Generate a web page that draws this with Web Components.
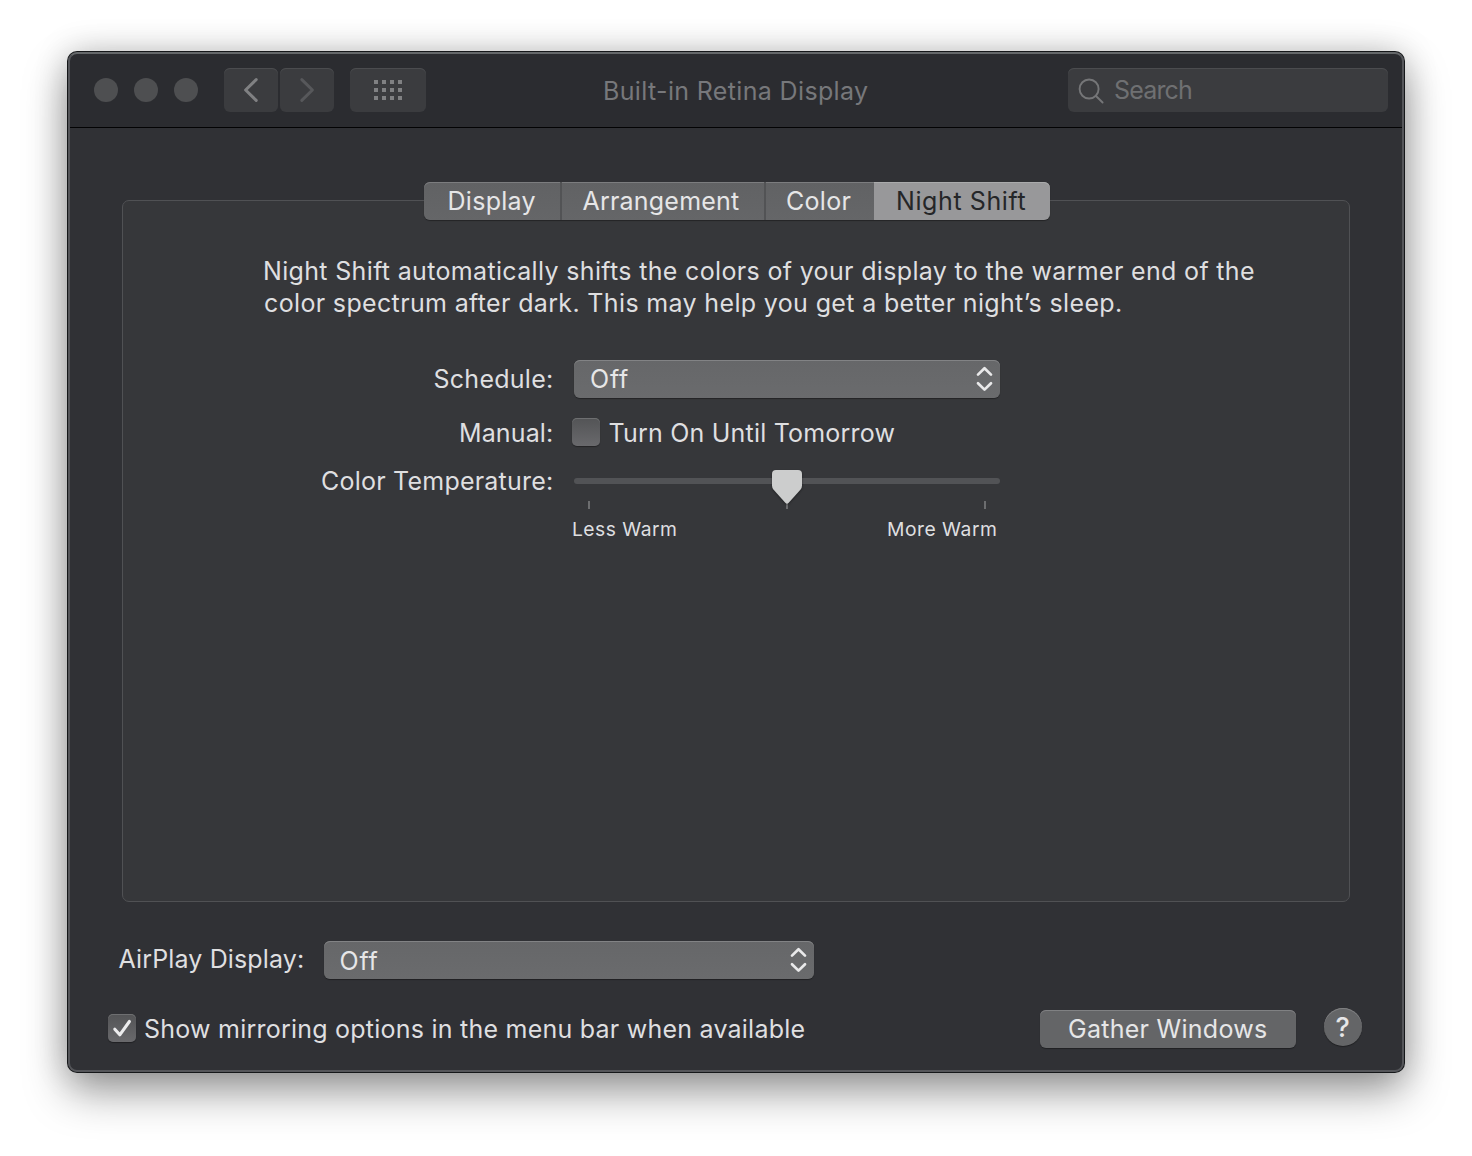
<!DOCTYPE html>
<html lang="en">
<head>
<meta charset="utf-8">
<title>Built-in Retina Display</title>
<style>
html,body{margin:0;background:#fff}
body{width:1472px;height:1156px;overflow:hidden;font-family:Inter,"Liberation Sans",sans-serif;font-size:25px;color:#dfdfe0}
</style>
</head>
<body>
<prefs-window>
  <prefs-toolbar slot="toolbar"></prefs-toolbar>
  <prefs-tabs slot="tabs">
    <prefs-tab style="width:136px;padding-left:25.5px"><ui-label w="86">Display</ui-label></prefs-tab>
    <prefs-tab style="width:204px;padding-left:20.5px"><ui-label w="156.5">Arrangement</ui-label></prefs-tab>
    <prefs-tab style="width:110px;padding-left:21px"><ui-label w="63.5">Color</ui-label></prefs-tab>
    <prefs-tab selected style="width:176px;padding-left:24px"><ui-label w="127.5">Night Shift</ui-label></prefs-tab>
  </prefs-tabs>
  <night-shift-pane slot="pane"></night-shift-pane>
  <prefs-footer slot="footer"></prefs-footer>
</prefs-window>
<script>
const ctx = document.createElement('canvas').getContext('2d');
const define = (name, html, setup) => customElements.define(name, class extends HTMLElement {
  connectedCallback() {
    if (this.shadowRoot) return;
    const root = this.attachShadow({mode: 'open'});
    root.innerHTML = '<style>*,:host{box-sizing:border-box}</style>' + html;
    if (setup) setup(this, root);
  }
});

// One line of text, tracked so that its visible glyphs span exactly `w` pixels.
define('ui-label', `<style>
  :host{display:block;flex:none;line-height:32px;height:32px;white-space:pre}
  span{display:block;width:max-content}
</style><span><slot></slot></span>`, (el, root) => {
  const s = getComputedStyle(el), text = el.textContent, w = +el.getAttribute('w');
  ctx.font = s.fontWeight + ' ' + s.fontSize + ' ' + s.fontFamily;
  const m = ctx.measureText(text);
  const ink = m.actualBoundingBoxLeft + m.actualBoundingBoxRight;
  el.style.width = w + 'px';
  const span = root.querySelector('span');
  span.style.marginLeft = m.actualBoundingBoxLeft + 'px';
  if (text.length > 1) span.style.letterSpacing = ((w - ink) / (text.length - 1)).toFixed(3) + 'px';
});

define('ui-select', `<style>
  :host{display:flex;flex:none;align-items:center;height:38px;padding:0 7px 0 17px;border-radius:6px;color:#e6e6e7;
    background:linear-gradient(#666769,#6a6b6d);box-shadow:inset 0 1px 0 #828385,0 1px 1px rgba(0,0,0,.35)}
  svg{margin-left:auto}
</style><slot></slot>
<svg width="17" height="26" viewBox="0 0 17 26" fill="none" stroke="#e9e9ea" stroke-width="2.7" stroke-linecap="round" stroke-linejoin="round"><path d="M2 8.6 8.5 2.2 15 8.6M2 17.2 8.5 23.6 15 17.2"/></svg>`);

define('ui-checkbox', `<style>
  :host{display:block;flex:none;width:28px;height:28px;border-radius:5px;background:linear-gradient(#535456,#69696c);
    box-shadow:inset 0 1px 0 #6e6f71,0 1px 1px rgba(0,0,0,.35)}
  svg{display:none}
  :host([checked]) svg{display:block}
</style><svg width="28" height="28" viewBox="0 0 28 28" fill="none" stroke="#ececed" stroke-width="3.1" stroke-linecap="round" stroke-linejoin="round"><path d="M6.8 15.2 11.8 20.8 21.4 7.5"/></svg>`);

define('ui-button', `<style>
  :host{display:flex;flex:none;align-items:center;height:38px;border-radius:6px;color:#e6e6e7;
    background:#646567;box-shadow:inset 0 1px 0 #808183,0 1px 1px rgba(0,0,0,.35)}
  :host([round]){width:38px;border-radius:50%;justify-content:center}
</style><slot></slot>`);

define('ui-slider', `<style>
  :host{display:grid;flex:none;width:426px;height:39px}
  .track{grid-area:1/1;margin-top:8px;height:6px;border-radius:3px;background:#525356}
  .ticks{grid-area:1/1;display:flex;justify-content:space-between;align-items:flex-end;padding:0 14px}
  i{width:2px;height:8px;background:#6c6d6f}
  svg{grid-area:1/1;justify-self:center;filter:drop-shadow(0 1px 1px rgba(0,0,0,.4))}
</style><div class="track"></div><div class="ticks"><i></i><i></i><i></i></div>
<svg width="30" height="34" viewBox="0 0 30 34"><path fill="#cccdcd" d="M4 0H26Q30 0 30 4V15.5Q30 18 28.4 19.8L16.5 33Q15 34.5 13.5 33L1.6 19.8Q0 18 0 15.5V4Q0 0 4 0Z"/></svg>`);

define('toolbar-button', `<style>
  :host{display:block;flex:none;width:54px;height:44px;border-radius:6px;background:#3b3c3f;box-shadow:inset 0 1px 0 #4b4c4f}
  :host([wide]){width:76px}
</style><slot></slot>`);

define('toolbar-search', `<style>
  :host{display:flex;flex:none;width:320px;height:44px;padding:6px 0 0 10px;gap:11px;border-radius:6px;background:#3b3c3f;color:#6f7072;box-shadow:inset 0 1px 0 #4b4c4f}
  svg{margin-top:4px}
</style><svg width="26" height="26" viewBox="0 0 26 26" fill="none" stroke="#757678" stroke-width="1.9" stroke-linecap="round"><circle cx="11.1" cy="11" r="9.5"/><path d="m18 18 6.6 6.5"/></svg>
<ui-label w="76">Search</ui-label>`);

define('prefs-toolbar', `<style>
  :host{display:flex;align-items:flex-start;height:76px;padding:16px 16px 0 26px;background:#2b2c30;border-bottom:1px solid #030304}
  .lights{display:flex;gap:16px;margin:10px 26px 0 0}
  .lights i{width:24px;height:24px;border-radius:50%;background:#4e4f51}
  .nav{display:flex;gap:2px;margin-right:16px}
  svg{display:block}
  .title{margin:7px 0 0 179px;color:#77787b}
  toolbar-search{margin-left:auto}
</style>
<div class="lights"><i></i><i></i><i></i></div>
<div class="nav">
  <toolbar-button><svg width="54" height="44" fill="none" stroke="#808183" stroke-width="3" stroke-linecap="round" stroke-linejoin="round"><path d="M32.2 11.6 21.6 22 32.2 32.4"/></svg></toolbar-button>
  <toolbar-button><svg width="54" height="44" fill="none" stroke="#57585b" stroke-width="3" stroke-linecap="round" stroke-linejoin="round"><path d="M21.8 11.6 32.4 22 21.8 32.4"/></svg></toolbar-button>
</div>
<toolbar-button wide><svg width="76" height="44" fill="#808183"><defs><g id="r"><path d="M24 0h4v4h-4zM32 0h4v4h-4zM40 0h4v4h-4zM48 0h4v4h-4z"/></g></defs><use href="#r" y="12"/><use href="#r" y="20"/><use href="#r" y="28"/></svg></toolbar-button>
<ui-label class="title" w="263">Built-in Retina Display</ui-label>
<toolbar-search></toolbar-search>`);

define('prefs-tab', `<style>
  :host{display:flex;align-items:center;height:38px;background:linear-gradient(#616264,#656668);color:#e6e6e7;box-shadow:inset 0 1px 0 #7c7d7f}
  :host(:nth-child(2)),:host(:nth-child(3)){border-left:2px solid #525355}
  :host([selected]){background:#98989a;color:#252628;box-shadow:inset 0 1px 0 #aaabac}
  :host(:first-child){border-radius:6px 0 0 6px}
  :host(:last-child){border-radius:0 6px 6px 0}
</style><slot></slot>`);

define('prefs-tabs', `<style>
  :host{display:flex;width:626px;border-radius:6px;box-shadow:0 1px 1px rgba(0,0,0,.35)}
</style><slot></slot>`);

define('night-shift-pane', `<style>
  :host{display:block}
  .intro{padding:54px 0 0 142px}
  .row{display:flex;align-items:flex-start}
  .row>.name{width:451px;display:flex;justify-content:flex-end;padding-right:22px}
  .schedule{margin-top:41px;height:38px}
  .schedule .name{padding-top:3px}
  .manual{margin-top:20px;height:28px}
  .manual .name{margin-top:-1px}
  .manual ui-checkbox{margin:0 9.5px 0 -2px}
  .manual .lab{margin-top:-1px}
  .temp{margin-top:24px;height:39px}
  .temp .name{margin-top:-5px}
  .ends{display:flex;gap:212px;margin:4px 0 0 450px;font-size:19.3px}
</style>
<div class="intro"><ui-label w="989">Night Shift automatically shifts the colors of your display to the warmer end of the</ui-label><ui-label w="856">color spectrum after dark. This may help you get a better night’s sleep.</ui-label></div>
<div class="row schedule"><div class="name"><ui-label w="117.5">Schedule:</ui-label></div><ui-select style="width:426px"><ui-label w="37">Off</ui-label></ui-select></div>
<div class="row manual"><div class="name"><ui-label w="91">Manual:</ui-label></div><ui-checkbox></ui-checkbox><ui-label class="lab" w="285">Turn On Until Tomorrow</ui-label></div>
<div class="row temp"><div class="name"><ui-label w="230">Color Temperature:</ui-label></div><ui-slider></ui-slider></div>
<div class="ends"><ui-label w="103">Less Warm</ui-label><ui-label w="108">More Warm</ui-label></div>`);

define('prefs-footer', `<style>
  :host{display:block;padding:39px 42px 0 40px}
  .row{display:flex;align-items:flex-start}
  .airplay{padding-left:10.5px;height:38px}
  .airplay .lab{margin:2px 20.5px 0 0}
  .bottom{margin-top:29px}
  .bottom ui-checkbox{margin:6px 9px 0 0}
  .bottom .lab{margin-top:5px}
  .gather{width:256px;padding-left:29px;margin:2px 28px 0 auto}
  .help{font-size:27px;font-weight:500}
  .help ui-label{margin:1px 0 0 1px}
</style>
<div class="row airplay"><ui-label class="lab" w="184.5">AirPlay Display:</ui-label><ui-select style="width:490px"><ui-label style="margin-top:2px" w="37">Off</ui-label></ui-select></div>
<div class="row bottom"><ui-checkbox checked></ui-checkbox><ui-label class="lab" w="659.5">Show mirroring options in the menu bar when available</ui-label>
<ui-button class="gather"><ui-label w="197">Gather Windows</ui-label></ui-button><ui-button round class="help"><ui-label w="14">?</ui-label></ui-button></div>`);

define('prefs-window', `<style>
  :host{display:flex;flex-direction:column;position:relative;width:1336px;height:1020px;margin:52px 68px;border-radius:9px;
    background:#303135;box-shadow:0 0 0 1px #151719,0 20px 44px rgba(0,0,0,.38),0 0 34px rgba(0,0,0,.2)}
  :host::after{content:"";position:absolute;inset:0;border:2px solid #55565a;border-top-color:#65686a;border-radius:9px;pointer-events:none}
  ::slotted([slot=toolbar]){border-radius:9px 9px 0 0}
  .tabs{display:flex;margin:54px 0 -20px 356px;z-index:1}
  .pane{height:702px;margin:0 54px;border:1px solid #505154;border-radius:7px;background:#36373a}
</style>
<slot name="toolbar"></slot><div class="tabs"><slot name="tabs"></slot></div><div class="pane"><slot name="pane"></slot></div><slot name="footer"></slot>`);
</script>
</body>
</html>
